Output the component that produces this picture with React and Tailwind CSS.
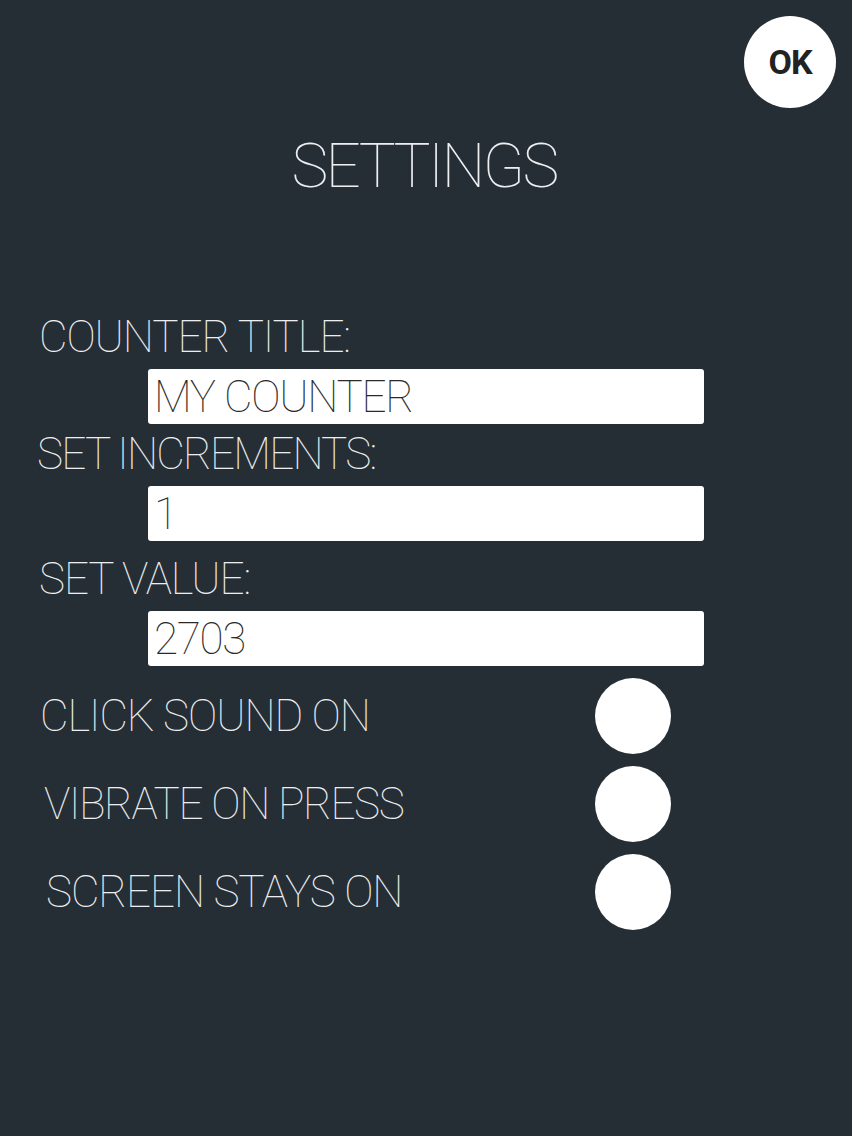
import React from "react";

const fields = [
  { label: "COUNTER TITLE:", value: "MY COUNTER", labelCls: "pl-[39px] tracking-[-1.1px]", top: "mt-[118px]" },
  { label: "SET INCREMENTS:", value: "1", labelCls: "pl-[37px] tracking-[-1.8px]", top: "mt-[8px]" },
  { label: "SET VALUE:", value: "2703", labelCls: "pl-[39px] tracking-[-1.1px]", top: "mt-[16px]" },
];

const toggles = [
  { label: "CLICK SOUND ON", cls: "pl-[40px] tracking-[-1.1px]" },
  { label: "VIBRATE ON PRESS", cls: "pl-[44px] tracking-[-1.4px]" },
  { label: "SCREEN STAYS ON", cls: "pl-[46px] tracking-[-1.1px]" },
];

const App = () => {
  return (
    <div className="min-h-screen w-full bg-[#252d35] font-['Roboto','Liberation_Sans',sans-serif] text-[#eceef0]">
      <div className="flex justify-end pt-[16px] pr-[16px]">
        <button className="w-[92px] h-[92px] rounded-full bg-white text-[#222] text-[34px] font-bold leading-none flex items-center justify-center tracking-[-1px]">
          OK
        </button>
      </div>

      <h1 className="mt-[27px] text-center text-[62px] leading-none font-thin tracking-[-2.7px] pr-[4px]">SETTINGS</h1>

      {fields.map((f) => (
        <div key={f.label} className={f.top}>
          <p className={`text-[44px] leading-none font-thin ${f.labelCls}`}>{f.label}</p>
          <div className="mt-[10px] ml-[148px] w-[556px] h-[55px] bg-white rounded-[3px] flex items-center pl-[6px]">
            <span className="text-[44px] leading-none font-thin tracking-[-1.3px] text-[#2a2a2a]">{f.value}</span>
          </div>
        </div>
      ))}

      <div className="mt-[12px] flex flex-col gap-[12px]">
        {toggles.map((t) => (
          <div key={t.label} className="flex items-center h-[76px]">
            <p className={`w-[595px] text-[44px] leading-none font-thin ${t.cls}`}>{t.label}</p>
            <div className="w-[76px] h-[76px] rounded-full bg-white" />
          </div>
        ))}
      </div>
    </div>
  );
};

export default App;
